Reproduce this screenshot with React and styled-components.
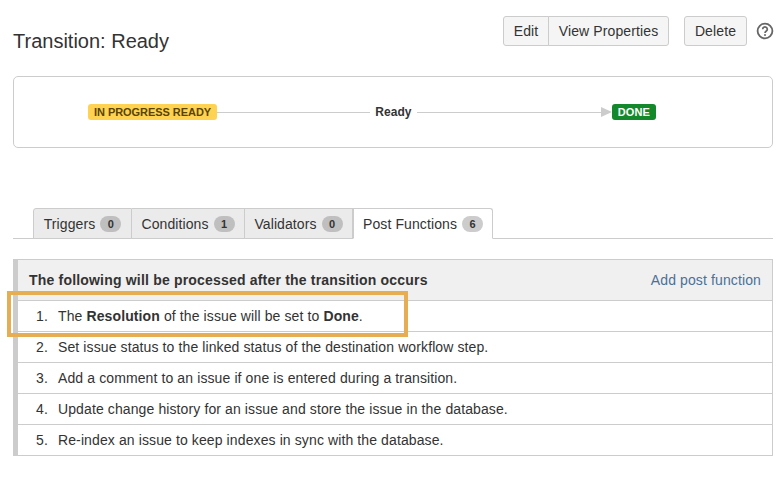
import React from 'react'
import styled, { createGlobalStyle } from 'styled-components'

const GlobalStyle = createGlobalStyle`
  html, body {
    margin: 0;
    background: #fff;
    font-family: "Liberation Sans", Arial, sans-serif;
    color: #333;
  }
`

const Page = styled.div`
  width: 782px;
  height: 500px;
  overflow: hidden;
  padding: 16px 9px 0 13px;
  box-sizing: border-box;
`

const Header = styled.div`
  display: flex;
  justify-content: space-between;
  height: 60px;
`

const Title = styled.h1`
  margin: 13px 0 0;
  font-size: 20px;
  line-height: 24px;
  font-weight: 400;
  color: #333;
`

const Actions = styled.div`
  display: flex;
  align-items: flex-start;
`

const ButtonGroup = styled.div`
  display: flex;
  margin-right: ${p => p.$gap}px;
`

const Button = styled.button`
  height: 30px;
  width: ${p => p.$width}px;
  padding: 0;
  box-sizing: border-box;
  font: 14px "Liberation Sans", Arial, sans-serif;
  letter-spacing: 0.12px;
  color: #333;
  background: #f5f5f5;
  border: 1px solid #ccc;
  border-radius: ${p => p.$radius || '3px'};
  margin-left: ${p => p.$overlap ? '-1px' : '0'};
`

const HelpIcon = styled.svg`
  width: 18px;
  height: 18px;
  margin-top: 6px;
  margin-right: -1px;
`

const Diagram = styled.div`
  height: 72px;
  box-sizing: border-box;
  border: 1px solid #ccc;
  border-radius: 5px;
  display: flex;
  align-items: center;
  padding: 0 116px 0 74px;
`

const Lozenge = styled.span`
  flex: none;
  height: 16px;
  line-height: 16px;
  padding: 0 6px;
  border-radius: 3px;
  font-size: 11px;
  font-weight: 700;
  background: ${p => p.$bg};
  color: ${p => p.$color};
  letter-spacing: ${p => p.$spacing || '0'};
`

const Line = styled.div`
  flex: ${p => p.$width ? 'none' : '1'};
  width: ${p => p.$width ? `${p.$width}px` : 'auto'};
  height: 1px;
  background: #ccc;
`

const Arrow = styled.div`
  flex: none;
  width: 0;
  height: 0;
  border-left: 11px solid #ccc;
  border-top: 5px solid transparent;
  border-bottom: 5px solid transparent;
`

const LineLabel = styled.span`
  flex: none;
  margin: 0 5px;
  font-size: 12px;
  font-weight: 700;
  letter-spacing: 0.1px;
  color: #333;
`

const Tabs = styled.div`
  display: flex;
  margin-top: 60px;
  padding-left: 20px;
  height: 31px;
  box-sizing: border-box;
  border-bottom: 1px solid #ccc;
`

const Tab = styled.div`
  width: ${p => p.$width}px;
  height: 31px;
  box-sizing: border-box;
  display: flex;
  align-items: center;
  justify-content: center;
  gap: 5px;
  font-size: 14px;
  letter-spacing: 0.1px;
  color: #333;
  border: 1px solid #ccc;
  border-bottom: ${p => p.$active ? '1px solid #fff' : '1px solid #ccc'};
  border-left-width: ${p => p.$first || p.$active ? '1px' : '0'};
  background: ${p => p.$active ? '#fff' : '#ebebeb'};
  border-radius: ${p => p.$first ? '3px 0 0 0' : p.$active ? '0 3px 0 0' : '0'};
`

const Count = styled.span`
  width: 21px;
  height: 16px;
  line-height: 16px;
  border-radius: 8px;
  background: ${p => p.$active ? '#ccc' : '#bfbfbf'};
  text-align: center;
  font-size: 11px;
  font-weight: 700;
  letter-spacing: 0;
  color: #333;
`

const Panel = styled.div`
  margin-top: 20px;
  height: 197px;
  box-sizing: border-box;
  border: 1px solid #ccc;
  border-left: 5px solid #ccc;
`

const PanelHead = styled.div`
  height: 41px;
  box-sizing: border-box;
  display: flex;
  align-items: center;
  justify-content: space-between;
  padding: 0 11px;
  background: #f0f0f0;
  border-bottom: 1px solid #ccc;
`

const PanelTitle = styled.strong`
  font-size: 14px;
  letter-spacing: 0.19px;
  color: #333;
`

const AddLink = styled.a`
  font-size: 14px;
  letter-spacing: 0.12px;
  color: #4a7199;
  text-decoration: none;
`

const Steps = styled.ol`
  list-style: none;
  margin: 0;
  padding: 0;
`

const Step = styled.li`
  position: relative;
  height: 31px;
  box-sizing: border-box;
  display: flex;
  align-items: center;
  font-size: 14px;
  letter-spacing: 0.11px;
  color: #333;
  border-bottom: 1px solid #ccc;
  &:last-child {
    height: 30px;
    border-bottom: 0;
  }
`

const StepNumber = styled.span`
  width: 30px;
  flex: none;
  text-align: right;
  margin-right: 10px;
`

const Highlight = styled.div`
  position: absolute;
  left: -11px;
  top: -10px;
  width: 401px;
  height: 46px;
  box-sizing: border-box;
  border: 4px solid #e6ad52;
  pointer-events: none;
`

const tabs = [
  { name: 'Triggers', count: 0, width: 99, first: true },
  { name: 'Conditions', count: 1, width: 113 },
  { name: 'Validators', count: 0, width: 108 },
  { name: 'Post Functions', count: 6, width: 140, active: true },
]

const steps = [
  <>The <b>Resolution</b> of the issue will be set to <b>Done</b>.</>,
  'Set issue status to the linked status of the destination workflow step.',
  'Add a comment to an issue if one is entered during a transition.',
  'Update change history for an issue and store the issue in the database.',
  'Re-index an issue to keep indexes in sync with the database.',
]

export default function App() {
  return (
    <Page>
      <GlobalStyle />
      <Header>
        <Title>Transition: Ready</Title>
        <Actions>
          <ButtonGroup $gap={15}>
            <Button $width={46} $radius="3px 0 0 3px">Edit</Button>
            <Button $width={121} $radius="0 3px 3px 0" $overlap>View Properties</Button>
          </ButtonGroup>
          <ButtonGroup $gap={9}>
            <Button $width={63}>Delete</Button>
          </ButtonGroup>
          <HelpIcon viewBox="0 0 18 18">
            <circle cx="9" cy="9" r="7.4" fill="none" stroke="#666" strokeWidth="1.8" />
            <path d="M6.7 7.2a2.3 2.2 0 1 1 3.6 1.8c-.9.6-1.3 1-1.3 2" fill="none" stroke="#666" strokeWidth="1.7" />
            <circle cx="9" cy="13" r="1" fill="#666" />
          </HelpIcon>
        </Actions>
      </Header>

      <Diagram>
        <Lozenge $bg="#ffd351" $color="#594300" $spacing="-0.05px">IN PROGRESS READY</Lozenge>
        <Line $width={153} />
        <LineLabel>Ready</LineLabel>
        <Line />
        <Arrow />
        <Lozenge $bg="#14892c" $color="#fff" $spacing="0.1px">DONE</Lozenge>
      </Diagram>

      <Tabs>
        {tabs.map(tab => (
          <Tab key={tab.name} $width={tab.width} $first={tab.first} $active={tab.active}>
            {tab.name}
            <Count $active={tab.active}>{tab.count}</Count>
          </Tab>
        ))}
      </Tabs>

      <Panel>
        <PanelHead>
          <PanelTitle>The following will be processed after the transition occurs</PanelTitle>
          <AddLink href="#">Add post function</AddLink>
        </PanelHead>
        <Steps>
          {steps.map((step, i) => (
            <Step key={i}>
              <StepNumber>{i + 1}.</StepNumber>
              <span>{step}</span>
              {i === 0 && <Highlight />}
            </Step>
          ))}
        </Steps>
      </Panel>
    </Page>
  )
}
